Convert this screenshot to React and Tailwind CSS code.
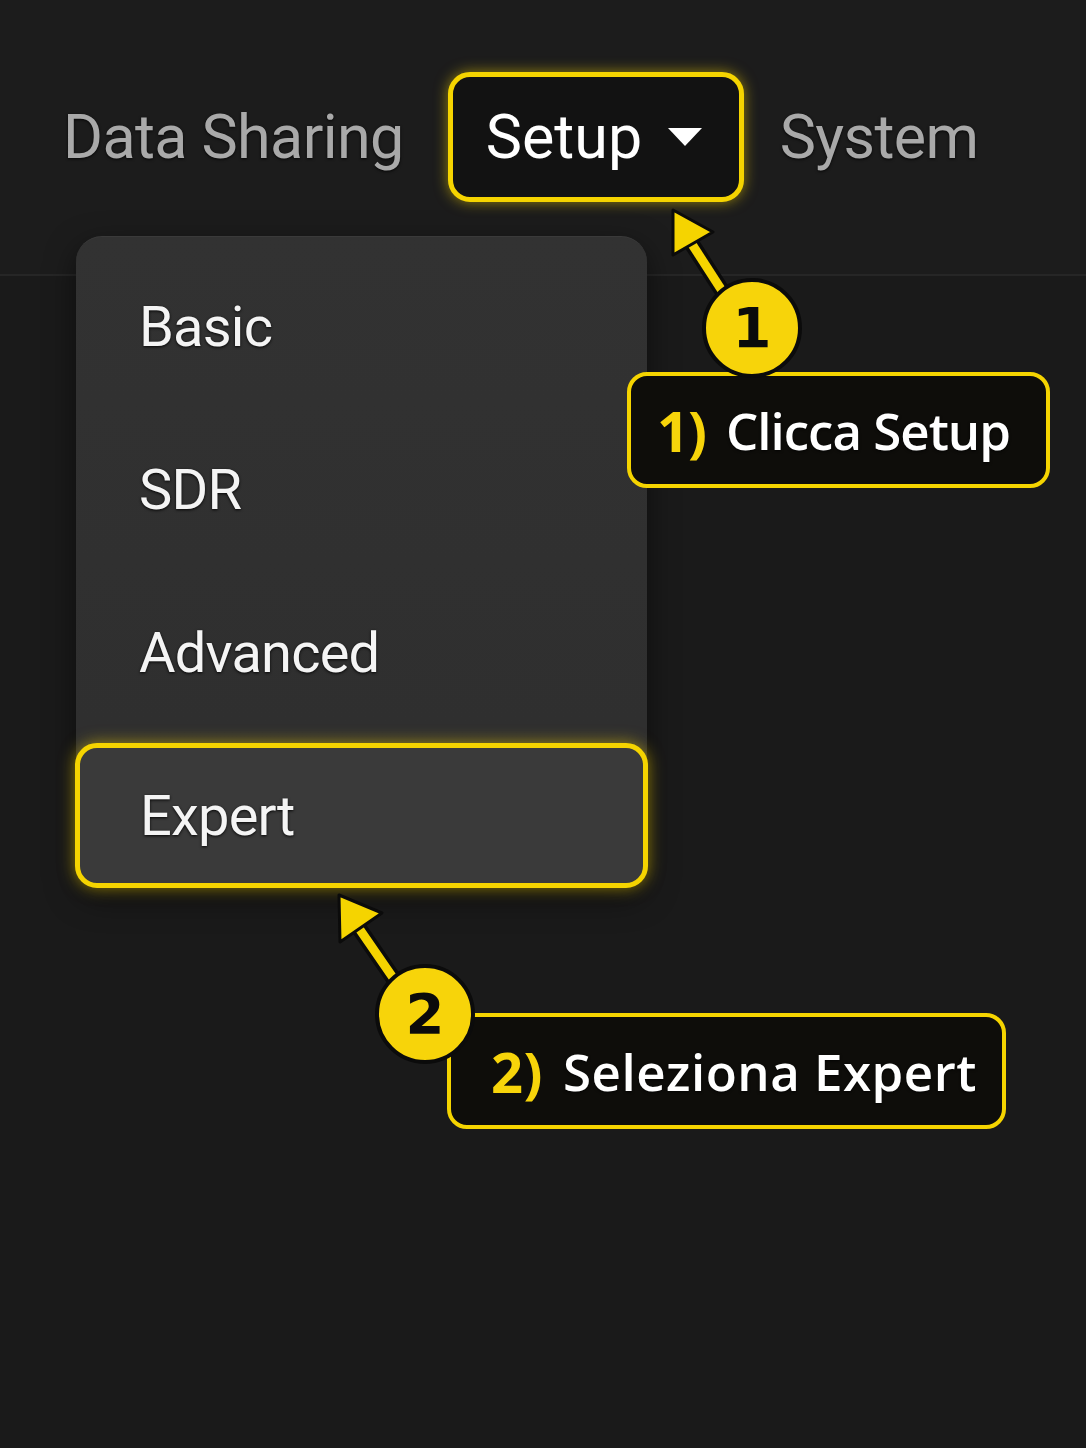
const MENU = ["Basic", "SDR", "Advanced"];

function Badge({ n, className }) {
  return (
    <div
      className={`absolute w-[100px] h-[100px] rounded-full bg-[#f7d40a] border-[4px] border-[#0b0b0b] flex items-center justify-center text-[#0b0b0b] text-[56px] font-bold leading-none font-['DejaVu_Sans',sans-serif] ${className}`}
    >
      {n}
    </div>
  );
}

function Callout({ n, text, className }) {
  return (
    <div
      className={`absolute h-[116px] rounded-[20px] border-[4px] border-[#f5d400] bg-[#0e0d0a] flex items-center font-['Open_Sans',sans-serif] font-semibold text-[51px] ${className}`}
    >
      <span className="text-[#f7d40a] text-[56px] font-bold mr-[20px]">{n})</span>
      <span className="text-white [text-shadow:0_1px_3px_rgba(0,0,0,0.8)]">{text}</span>
    </div>
  );
}

export default function App() {
  return (
    <div className="relative w-[1086px] h-[1448px] overflow-hidden bg-[#1a1a1a] font-['Roboto',sans-serif]">
      {/* Top nav */}
      <header className="h-[276px] bg-[#1c1c1c] border-b-2 border-[#262626]">
        <nav className="flex items-center pt-[72px] pl-[63px] text-[61px] leading-none [text-shadow:0_1px_3px_rgba(0,0,0,0.8)]">
          <span className="text-[#a9a9a9] tracking-[-0.6px]">Data Sharing</span>
          <button className="ml-[44px] h-[130px] w-[296px] rounded-[22px] border-[5px] border-[#f5d400] bg-[#121212] shadow-[0_0_14px_rgba(250,215,0,0.55)] flex items-center pl-[33px] text-white">
            Setup
            <svg width="34" height="18" viewBox="0 0 34 18" className="ml-[26px]">
              <path d="M0 0h34L17 18z" fill="white" />
            </svg>
          </button>
          <span className="ml-[36px] text-[#a9a9a9] tracking-[-0.6px]">System</span>
        </nav>
      </header>

      {/* Setup dropdown */}
      <div className="absolute left-[76px] top-[236px] w-[571px] pt-[8px] rounded-[26px] bg-gradient-to-b from-[#323232] to-[#2e2e2e] border-t border-[#3a3a3a] shadow-[0_10px_30px_rgba(0,0,0,0.5)] text-[56px] tracking-[-0.8px] text-[#f4f4f4] [text-shadow:0_1px_3px_rgba(0,0,0,0.9)]">
        {MENU.map((item) => (
          <div key={item} className="h-[163px] flex items-center pl-[63px]">
            {item}
          </div>
        ))}
        <div className="mt-[9px] -mx-px h-[145px] rounded-[22px] border-[5px] border-[#f5d400] bg-[#3a3a3a] shadow-[0_0_16px_rgba(250,215,0,0.55)] flex items-center pl-[60px]">
          Expert
        </div>
      </div>

      {/* Pointer arrows */}
      <svg className="absolute inset-0 pointer-events-none" width="1086" height="1448">
        <g strokeLinecap="round" strokeLinejoin="round">
          <line x1="728" y1="300" x2="688" y2="238" stroke="#0b0b0b" strokeWidth="16" />
          <line x1="728" y1="300" x2="688" y2="238" stroke="#f5d400" strokeWidth="9" />
          <path d="M673 210L713 232L673 255Z" fill="#f5d400" stroke="#0b0b0b" strokeWidth="3" />
          <line x1="398" y1="985" x2="356" y2="924" stroke="#0b0b0b" strokeWidth="16" />
          <line x1="398" y1="985" x2="356" y2="924" stroke="#f5d400" strokeWidth="9" />
          <path d="M339 895L382 913L340 942Z" fill="#f5d400" stroke="#0b0b0b" strokeWidth="3" />
        </g>
      </svg>

      <Callout n="1" text="Clicca Setup" className="left-[627px] top-[372px] w-[423px] pl-[26px] tracking-[-1px]" />
      <Badge n="1" className="left-[702px] top-[278px]" />

      <Callout n="2" text="Seleziona Expert" className="left-[447px] top-[1013px] w-[559px] pl-[40px] tracking-[0.5px]" />
      <Badge n="2" className="left-[375px] top-[964px]" />
    </div>
  );
}
